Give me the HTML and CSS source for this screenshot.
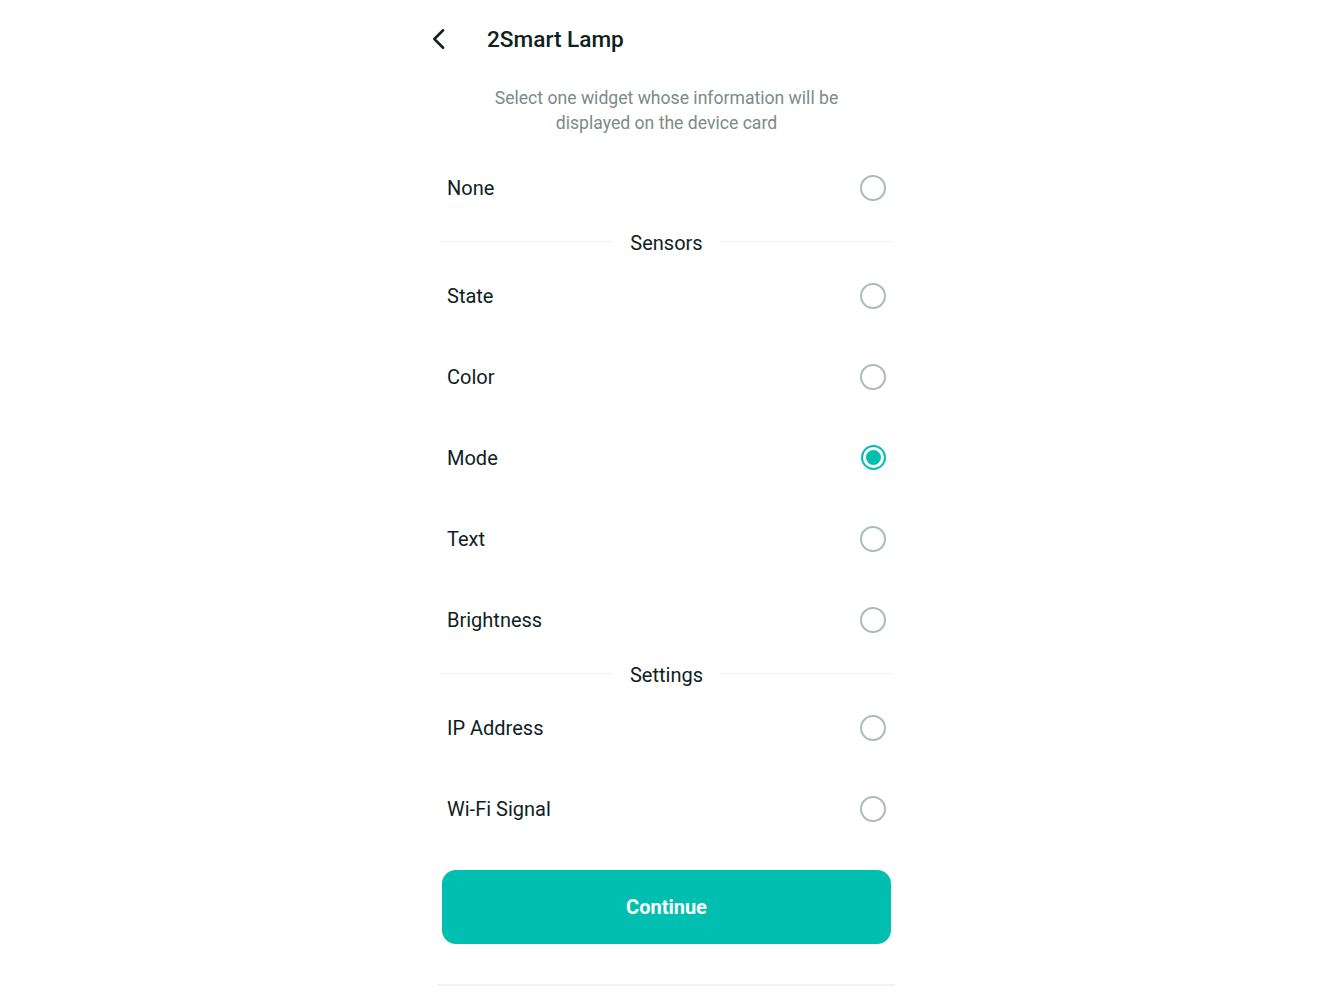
FILE: index.html
```html
<!DOCTYPE html>
<html lang="en">
<head>
    <meta charset="UTF-8">
    <meta name="viewport" content="width=device-width, initial-scale=1.0">
    <title>2Smart Lamp</title>
    <link rel="stylesheet" href="styles.css">
</head>
<body>
    <div class="screen">
        <header class="top-bar">
            <button class="back-btn" aria-label="Back">
                <svg viewBox="0 0 24 24" width="28" height="28" fill="none" stroke="#0d2221" stroke-width="2.2" stroke-linecap="round" stroke-linejoin="round"><path d="M15.5 4.5l-7.5 7.5l7.5 7.5"/></svg>
            </button>
            <h1>2Smart Lamp</h1>
        </header>

        <p class="hint">Select one widget whose information will be displayed on the device card</p>

        <!-- Lista de widgets -->
        <div class="widget-list">
            <label class="widget-row"><span>None</span><span class="radio"></span></label>

            <div class="section-title"><span>Sensors</span></div>
            <label class="widget-row"><span>State</span><span class="radio"></span></label>
            <label class="widget-row"><span>Color</span><span class="radio"></span></label>
            <label class="widget-row"><span>Mode</span><span class="radio checked"></span></label>
            <label class="widget-row"><span>Text</span><span class="radio"></span></label>
            <label class="widget-row"><span>Brightness</span><span class="radio"></span></label>

            <div class="section-title"><span>Settings</span></div>
            <label class="widget-row"><span>IP Address</span><span class="radio"></span></label>
            <label class="widget-row"><span>Wi-Fi Signal</span><span class="radio"></span></label>
        </div>

        <button class="continue-btn">Continue</button>
        <div class="bottom-line"></div>
    </div>
</body>
</html>
```

FILE: styles.css
```css
/* Estilos generales */
body {
    font-family: Roboto, "Noto Sans", Arial, sans-serif;
    margin: 0;
    padding: 0;
    background-color: #ffffff;
    color: #0d2221;
}

.screen {
    width: 453px;
    margin: 0 auto;
}

.top-bar {
    display: flex;
    align-items: center;
    height: 78px;
}

.back-btn {
    background: none;
    border: none;
    padding: 0;
    margin-left: -17px;
    width: 32px;
    height: 32px;
    display: flex;
    align-items: center;
    justify-content: center;
    cursor: pointer;
}

.top-bar h1 {
    margin: 0 0 0 32px;
    font-size: 22.6px;
    font-weight: 500;
    color: #0d2221;
}

.hint {
    margin: 8px 40px 0;
    text-align: center;
    font-size: 17.6px;
    line-height: 25px;
    color: #7b8b89;
}

.widget-list {
    margin-top: 11px;
}

.widget-row {
    display: flex;
    justify-content: space-between;
    align-items: center;
    height: 81px;
    padding: 0 7px;
    font-size: 20px;
    cursor: pointer;
}

.radio {
    width: 22px;
    height: 22px;
    border: 2px solid #a8bbba;
    border-radius: 50%;
    position: relative;
}

.radio.checked {
    border: 2.5px solid #00bfb1;
    width: 21px;
    height: 21px;
}

.radio.checked::after {
    content: "";
    position: absolute;
    top: 3px;
    left: 3px;
    width: 15px;
    height: 15px;
    border-radius: 50%;
    background: #00bfb1;
}

.section-title {
    display: flex;
    align-items: center;
    height: 27px;
    font-size: 20px;
}

.section-title::before,
.section-title::after {
    content: "";
    flex: 1;
    height: 1px;
    background: #eef1f1;
}

.section-title span {
    padding: 2px 18px 0;
}

.continue-btn {
    display: block;
    width: 449px;
    height: 74px;
    margin: 21px auto 0;
    border: none;
    border-radius: 14px;
    background: #00bfb1;
    color: #ffffff;
    font-family: Roboto, Arial, sans-serif;
    font-size: 20px;
    font-weight: 700;
    cursor: pointer;
}

.bottom-line {
    height: 2px;
    margin: 40px -2px 0;
    background: #f0f2f2;
}
```
